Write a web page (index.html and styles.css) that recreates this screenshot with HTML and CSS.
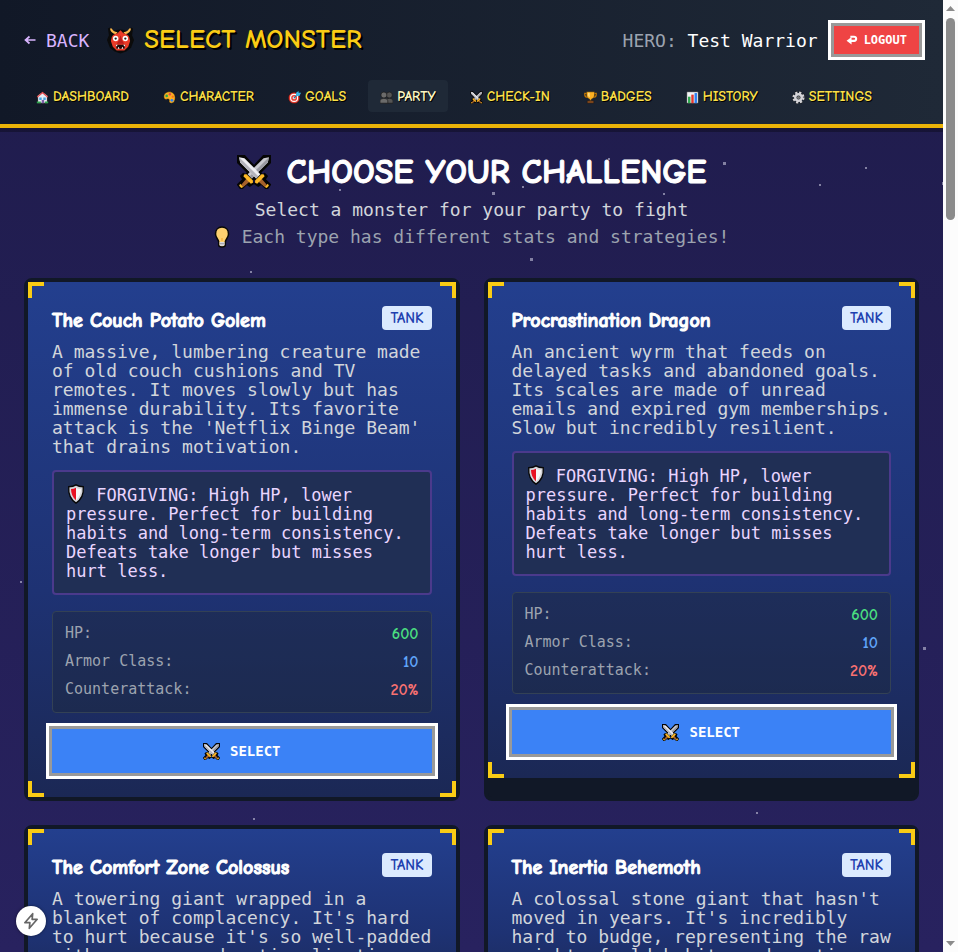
FILE: index.html
```
<!DOCTYPE html>
<html lang="en">
<head>
<meta charset="utf-8">
<meta name="viewport" content="width=device-width, initial-scale=1">
<title>Select Monster</title>
<link rel="stylesheet" href="styles.css">
</head>
<body>
<svg class="sprite" aria-hidden="true">
  <symbol id="swords" viewBox="0 0 32 32">
    <path d="M1 1h6l12 13 5 5 2-1 2 2-2 3 5 5-3 4-5-5-3 2-3-2 1-3L1 7zM31 1h-6L13 14l-5 5-2-1-2 2 2 3-5 5 3 4 5-5 3 2 3-2-1-3L31 7z" fill="#050505" stroke="#050505" stroke-width="2"/>
    <path d="M30 2l-5 1L10 18l4 4L29 7z" fill="#c9c9cf"/><path d="M30 2L12 20l2 2L29 7z" fill="#9a9aa2"/>
    <path d="M9 22l-5 6 2 2 6-5z" fill="#a5612b"/><path d="M3 27l3 3-2 1-2-2z" fill="#fdb827"/>
    <path d="M7 18l2 0 6 6 0 2-2 1-7-7z" fill="#fdb827"/>
    <path d="M2 2l5 1 15 15-4 4L3 7z" fill="#eeeef2"/><path d="M2 2l18 18-2 2L3 7z" fill="#b4b4bc"/>
    <path d="M23 22l5 6-2 2-6-5z" fill="#a5612b"/><path d="M29 27l-3 3 2 1 2-2z" fill="#fdb827"/>
    <path d="M25 18l-2 0-6 6 0 2 2 1 7-7z" fill="#fdb827"/>
  </symbol>
  <symbol id="house" viewBox="0 0 16 16">
    <path d="M2 15V7l-1-1 7-5 7 5-1 1v8z" fill="#e9eef5" stroke="#111" stroke-width="1"/>
    <path d="M1 7l7-6 7 6-1 1-6-5-6 5z" fill="#e5484d"/><path d="M4 8h3v3H4zM9 8h3v3H9z" fill="#4aa3df"/>
    <path d="M7 11h3v4H7z" fill="#7b5ea7"/><path d="M1 13h5v2H1zM11 13h4v2h-4z" fill="#2fa84f"/>
  </symbol>
  <symbol id="palette" viewBox="0 0 16 16">
    <path d="M8 1C3 1 1 4 1 7c0 3 2 4 4 3 2-.6 3 .4 2.600 2-.5 2 .8 3 2.900 3C14 15 15 11 15 8c0-4-3-7-7-7z" fill="#fdb022" stroke="#111" stroke-width=".6"/>
    <circle cx="4.500" cy="6" r="1.600" fill="#2ea84a"/><circle cx="8.500" cy="4" r="1.500" fill="#e5484d"/><circle cx="12" cy="7" r="1.400" fill="#f97316"/><circle cx="11" cy="11.500" r="1.700" fill="#2d7ff0"/>
  </symbol>
  <symbol id="target" viewBox="0 0 16 16">
    <circle cx="7.500" cy="8.500" r="7" fill="#e5392f" stroke="#111" stroke-width=".6"/><circle cx="7.500" cy="8.500" r="5" fill="#fff"/><circle cx="7.500" cy="8.500" r="3.600" fill="#e5392f"/><circle cx="7.500" cy="8.500" r="1.800" fill="#fff"/>
    <path d="M7 9l5-5" stroke="#2a6f97" stroke-width="1.500"/><path d="M10 5V2l3-2v2h3l-2 4h-4z" fill="#35b6e6"/>
  </symbol>
  <symbol id="people" viewBox="0 0 16 16">
    <g fill="#555" stroke="#151515" stroke-width=".8"><circle cx="11.500" cy="5" r="3.700"/><path d="M7 15v-3q0-3 4.500-3t4.500 3v3z"/><circle cx="4.800" cy="5" r="3.700" fill="#6b6b6b"/><path d="M0 15v-3q0-3 4.800-3t4.800 3v3z" fill="#6b6b6b"/></g>
  </symbol>
  <symbol id="trophy" viewBox="0 0 16 16">
    <path d="M4 3H1v2q0 3 4 3M12 3h3v2q0 3-4 3" fill="none" stroke="#c77800" stroke-width="1.500"/>
    <path d="M3 1h10v4q0 4-4 5v2H7v-2Q3 9 3 5z" fill="#fdb022" stroke="#111" stroke-width=".5"/><path d="M5 2h2v6Q5 7 5 5z" fill="#ffe08a"/>
    <path d="M4 12h8v3H4z" fill="#8a4b1c" stroke="#111" stroke-width=".5"/>
  </symbol>
  <symbol id="chart" viewBox="0 0 16 16">
    <path d="M1 1h14v14H1z" fill="#f3f4f6" stroke="#111" stroke-width=".5"/><path d="M2.500 7h3v8h-3z" fill="#2fa84f"/><path d="M6.500 4.500h3V15h-3z" fill="#e5392f"/><path d="M10.500 2.500h3V15h-3z" fill="#2d7ff0"/>
  </symbol>
  <symbol id="gear" viewBox="0 0 16 16">
    <circle cx="8" cy="8" r="6" fill="none" stroke="#111" stroke-width="4" stroke-dasharray="3 1.700"/>
    <circle cx="8" cy="8" r="6" fill="none" stroke="#d4d4d8" stroke-width="3" stroke-dasharray="2.700 2.010"/>
    <circle cx="8" cy="8" r="4" fill="none" stroke="#d4d4d8" stroke-width="3"/><circle cx="8" cy="8" r="2" fill="#777"/>
  </symbol>
  <symbol id="bulb" viewBox="0 0 16 22">
    <path d="M8 1C4 1 1.500 4 1.500 8c0 4 3 5 3.200 8v3q0 2 3.300 2t3.300-2v-3c.2-3 3.200-4 3.200-8 0-4-2.500-7-6.500-7z" fill="#fdd06f" stroke="#080808" stroke-width="1.500"/>
    <path d="M8 15v-3" fill="none" stroke="#f5a524"/><path d="M5.500 16h5v3q0 1-2.500 1t-2.500-1z" fill="#d6d6dc"/><path d="M5.500 17.700h5" stroke="#8b8b95" stroke-width=".8"/>
  </symbol>
  <symbol id="shield" viewBox="0 0 18 22">
    <path d="M9 1Q12 3 17 3q1 12-8 18Q0 15 1 3q5 0 8-2z" fill="#d5d5da" stroke="#080808" stroke-width="1.500"/>
    <path d="M9 4Q6.500 5.500 3.500 5.500 3.500 13 9 18z" fill="#e81123"/><path d="M9 4q2.500 1.500 5.500 1.500Q14.500 13 9 18z" fill="#f7f7f7"/>
  </symbol>
  <symbol id="oni" viewBox="0 0 28 28">
    <path d="M3 1l3 4q8-4 16 0l3-4 2 1-1 7 2 5-3 8-5 4-6 2-6-2-5-4-3-8 2-5-1-7z" fill="#0b0b0b"/>
    <path d="M3 2q1 5 6 6l2-2Q6 5 5 2zM25 2q-1 5-6 6l-2-2q5-1 6-4z" fill="#fdb84b"/>
    <path d="M14 4l3 3q5 1 6 4l1 4-2 6-4 4h-8l-4-4-2-6 1-4q1-3 6-4z" fill="#ea3b28"/>
    <path d="M14 9l2 6 2 3h-8l2-3z" fill="#b91c1c"/>
    <circle cx="9" cy="12.500" r="2.800" fill="#fff"/><circle cx="19" cy="12.500" r="2.800" fill="#fff"/><circle cx="9" cy="12.500" r="1.200" fill="#222"/><circle cx="19" cy="12.500" r="1.200" fill="#222"/>
    <path d="M9 19h10l-1 4h-8z" fill="#200808"/><path d="M9 19l1 2 1-2zM17 19l1 2 1-2zM11 23l1-2 1 2zM15 23l1-2 1 2z" fill="#fff"/>
  </symbol>
  <symbol id="return" viewBox="0 0 14 12">
    <path d="M5 2h4.500a2.300 2.300 0 010 5H4" fill="none" stroke="currentColor" stroke-width="2.500"/><path d="M6.500 2.500L.5 7l6 4.500z" fill="currentColor"/>
  </symbol>
  <symbol id="arrow-left" viewBox="0 0 12 12">
    <path d="M11.500 6H2M5.500 2.500L1.500 6l4 3.500" fill="none" stroke="currentColor" stroke-width="1.700"/>
  </symbol>
</svg>

<div class="shell">
  <div class="page">
    <header class="topbar">
      <div class="topbar-row">
        <div class="brand">
          <a class="back" href="#"><svg><use href="#arrow-left"/></svg>BACK</a>
          <h1><svg><use href="#oni"/></svg>SELECT MONSTER</h1>
        </div>
        <div class="hero">
          <span><span class="hero-label">HERO:</span> Test Warrior</span>
          <button class="pixel-button logout" type="button"><svg><use href="#return"/></svg>LOGOUT</button>
        </div>
      </div>
      <nav>
        <a href="#"><svg><use href="#house"/></svg>DASHBOARD</a>
        <a href="#"><svg><use href="#palette"/></svg>CHARACTER</a>
        <a href="#"><svg><use href="#target"/></svg>GOALS</a>
        <a class="active" href="#"><svg><use href="#people"/></svg>PARTY</a>
        <a href="#"><svg><use href="#swords"/></svg>CHECK-IN</a>
        <a href="#"><svg><use href="#trophy"/></svg>BADGES</a>
        <a href="#"><svg><use href="#chart"/></svg>HISTORY</a>
        <a href="#"><svg><use href="#gear"/></svg>SETTINGS</a>
      </nav>
    </header>

    <main>
      <svg class="stars" aria-hidden="true">
        <g fill="#b9b7d0" fill-opacity=".65">
          <rect x="339" y="61" width="2" height="2"/><rect x="492" y="64" width="3" height="3"/><rect x="522" y="58" width="2" height="2"/>
          <rect x="608" y="30" width="2" height="2"/><rect x="663" y="65" width="2" height="2"/><rect x="723" y="34" width="3" height="3"/>
          <rect x="530" y="130" width="3" height="3"/><rect x="250" y="143" width="2" height="2"/><rect x="865" y="39" width="2" height="2"/>
          <rect x="819" y="56" width="2" height="2"/><rect x="942" y="54" width="3" height="3"/><rect x="20" y="453" width="2" height="2"/>
          <rect x="923" y="519" width="3" height="3"/><rect x="756" y="684" width="2" height="2"/><rect x="253" y="690" width="2" height="2"/>
        </g>
      </svg>
      <section class="intro">
        <h2><svg><use href="#swords"/></svg>CHOOSE YOUR CHALLENGE</h2>
        <p>Select a monster for your party to fight</p>
        <p class="hint"><svg><use href="#bulb"/></svg>Each type has different stats and strategies!</p>
      </section>

      <section class="monsters">
        <article class="card"><div class="card-body">
          <i class="corner tl"></i><i class="corner tr"></i><i class="corner bl"></i><i class="corner br"></i>
          <div class="card-head"><h3>The Couch Potato Golem</h3><span class="badge">TANK</span></div>
          <p class="desc">A massive, lumbering creature made of old couch cushions and TV remotes. It moves slowly but has immense durability. Its favorite attack is the 'Netflix Binge Beam' that drains motivation.</p>
          <p class="trait"><svg><use href="#shield"/></svg> FORGIVING: High HP, lower pressure. Perfect for building habits and long-term consistency. Defeats take longer but misses hurt less.</p>
          <dl class="stats"><div><dt>HP:</dt><dd class="hp">600</dd></div><div><dt>Armor Class:</dt><dd class="ac">10</dd></div><div><dt>Counterattack:</dt><dd class="counter">20%</dd></div></dl>
          <button class="pixel-button select" type="button"><svg><use href="#swords"/></svg>SELECT</button>
        </div></article>

        <article class="card"><div class="card-body">
          <i class="corner tl"></i><i class="corner tr"></i><i class="corner bl"></i><i class="corner br"></i>
          <div class="card-head"><h3>Procrastination Dragon</h3><span class="badge">TANK</span></div>
          <p class="desc">An ancient wyrm that feeds on delayed tasks and abandoned goals. Its scales are made of unread emails and expired gym memberships. Slow but incredibly resilient.</p>
          <p class="trait"><svg><use href="#shield"/></svg> FORGIVING: High HP, lower pressure. Perfect for building habits and long-term consistency. Defeats take longer but misses hurt less.</p>
          <dl class="stats"><div><dt>HP:</dt><dd class="hp">600</dd></div><div><dt>Armor Class:</dt><dd class="ac">10</dd></div><div><dt>Counterattack:</dt><dd class="counter">20%</dd></div></dl>
          <button class="pixel-button select" type="button"><svg><use href="#swords"/></svg>SELECT</button>
        </div></article>

        <article class="card"><div class="card-body">
          <i class="corner tl"></i><i class="corner tr"></i>
          <div class="card-head"><h3>The Comfort Zone Colossus</h3><span class="badge">TANK</span></div>
          <p class="desc">A towering giant wrapped in a blanket of complacency. It's hard to hurt because it's so well-padded with excuses and rationalizations.</p>
        </div></article>

        <article class="card"><div class="card-body">
          <i class="corner tl"></i><i class="corner tr"></i>
          <div class="card-head"><h3>The Inertia Behemoth</h3><span class="badge">TANK</span></div>
          <p class="desc">A colossal stone giant that hasn't moved in years. It's incredibly hard to budge, representing the raw weight of old habits and routines.</p>
        </div></article>
      </section>
    </main>
  </div>

  <div class="scrollbar" aria-hidden="true">
    <svg viewBox="0 0 9 5"><path d="M4.500 0L9 5H0z"/></svg>
    <div class="track"><div class="thumb"></div></div>
    <svg viewBox="0 0 9 5"><path d="M4.500 5L9 0H0z"/></svg>
  </div>
</div>

<button class="dev-badge" type="button" aria-label="Developer tools">
  <svg viewBox="0 0 16 16"><path d="M9.500 1.500L2.500 9.500h4.500L6.500 14.500l7-8H9z" fill="none" stroke="#666" stroke-width="1.500" stroke-linejoin="round"/></svg>
</button>
</body>
</html>
```
FILE: styles.css
```
:root {
  --mono: Consolas, "DejaVu Sans Mono", "Liberation Mono", monospace;
  --comic: "Comic Sans MS", "Comic Neue", "Open Sans", sans-serif;
}

* { box-sizing: border-box; }

body {
  margin: 0;
  background: #1e1b4b;
  color: #fff;
  font: 18px/19px var(--mono);
}

h1, h2, h3, p, dl, dd { margin: 0; }
a { color: inherit; text-decoration: none; }
button { font: inherit; color: inherit; cursor: pointer; }
.sprite { position: absolute; width: 0; height: 0; }

.shell { display: flex; height: 100vh; }
.page {
  flex: 1;
  min-width: 0;
  overflow: auto;
  scrollbar-width: none;
  background: linear-gradient(#1f1c4c, #28225f);
}

/* Header */
.topbar {
  position: relative;
  z-index: 1;
  padding: 20px 24px 12px;
  border-bottom: 4px solid #eab308;
  background: linear-gradient(to right, #111827, #1f2937);
  box-shadow: 0 4px 0 rgba(0, 0, 0, .3);
}
.topbar-row, .brand, .hero, .back, h1, nav, nav a { display: flex; align-items: center; }
.topbar-row { justify-content: space-between; height: 40px; margin-bottom: 20px; }
.brand { gap: 18px; }
.back { gap: 10px; color: #d8b4fe; }
.back svg { width: 12px; height: 12px; }
h1 {
  gap: 10px;
  font: 700 27px/32px var(--comic);
  color: #facc15;
  text-shadow: 2px 2px 0 #000;
}
h1 svg { width: 27px; height: 28px; }
.hero { gap: 16px; }
.hero-label { color: #9ca3af; }

.pixel-button {
  display: flex;
  align-items: center;
  justify-content: center;
  border: 0;
  font-weight: 700;
  box-shadow: 0 0 0 3px #999, 0 0 0 6px #fff;
}
.logout {
  gap: 6px;
  height: 28px;
  padding: 0 12px;
  background: #ef4444;
  font-size: 12px;
}
.logout svg { width: 12px; height: 10px; }

nav { gap: 10px; }
nav a {
  gap: 4px;
  height: 32px;
  padding: 2px 12px 0;
  border-radius: 4px;
  font: 700 14px/16px var(--comic);
  color: #fde047;
  text-shadow: 1px 1px 0 #000;
}
nav svg { width: 13px; height: 13px; }
nav .active { background: #1f2937; color: #fef9c3; }

/* Intro */
main { position: relative; padding: 24px 24px 48px; }
.stars {
  position: absolute;
  inset: 0;
  width: 100%;
  height: 100%;
  pointer-events: none;
}
.intro { margin-bottom: 28px; text-align: center; color: #d1d5db; }
h2 {
  display: flex;
  align-items: center;
  justify-content: center;
  gap: 16px;
  margin-bottom: 4px;
  font: 700 34px/40px var(--comic);
  color: #fff;
}
h2, h3 { -webkit-text-stroke: 1px currentColor; }
h2 svg { width: 34px; height: 34px; }
.intro p { line-height: 27px; }
.intro .hint {
  display: flex;
  align-items: center;
  justify-content: center;
  gap: 12px;
  color: #9ca3af;
}
.hint svg { width: 16px; height: 22px; }

/* Monster cards */
.monsters { display: grid; grid-template-columns: 1fr 1fr; gap: 24px; }
.card {
  position: relative;
  min-width: 0;
  border: 4px solid #111827;
  border-radius: 8px;
  background: #111827;
}
.card-body {
  position: relative;
  padding: 24px;
  background: linear-gradient(#233f8e, #1e3273 60%, #1b2855);
}
.corner { position: absolute; width: 16px; height: 16px; border: 0 solid #facc15; }
.tl { top: 0; left: 0; border-width: 4px 0 0 4px; }
.tr { top: 0; right: 0; border-width: 4px 4px 0 0; }
.bl { bottom: 0; left: 0; border-width: 0 0 4px 4px; }
.br { bottom: 0; right: 0; border-width: 0 4px 4px 0; }

.card-head {
  display: flex;
  align-items: flex-start;
  justify-content: space-between;
  margin-bottom: 6px;
}
h3 { font: 700 20px/30px var(--comic); }
.badge {
  padding: 0 8px;
  border-radius: 4px;
  background: #dbeafe;
  color: #1e40af;
  font: 700 15px/24px var(--comic);
}
.desc { margin-bottom: 14px; color: #d1d5db; }
.trait {
  margin-bottom: 16px;
  padding: 12px;
  border: 2px solid #4b3a8c;
  border-radius: 4px;
  background: #202f55;
  color: #e9d5ff;
  font-size: 17px;
}
.trait svg { width: 20px; height: 20px; vertical-align: -3px; }
.stats {
  display: grid;
  gap: 8px;
  margin-bottom: 16px;
  padding: 12px;
  border: 1px solid #334155;
  border-radius: 4px;
  background: rgba(31, 41, 55, .4);
}
.stats div { display: flex; justify-content: space-between; line-height: 20px; }
dt { color: #9ca3af; font-size: 15px; line-height: 18px; }
dd { font: 700 16px/20px var(--comic); }
.hp { color: #4ade80; }
.ac { color: #60a5fa; }
.counter { color: #f87171; }
.select {
  gap: 10px;
  width: 100%;
  height: 44px;
  background: #3b82f6;
  font-size: 14px;
}
.select svg { width: 17px; height: 17px; }

/* Scrollbar */
.scrollbar {
  display: flex;
  flex-direction: column;
  align-items: center;
  gap: 7px;
  width: 15px;
  padding: 6px 0;
  background: #fcfcfc;
  fill: #8b8b8b;
}
.scrollbar svg { width: 9px; height: 5px; }
.track { flex: 1; width: 9px; }
.thumb { height: 22%; border-radius: 5px; background: #8b8b8b; }

.dev-badge {
  position: fixed;
  left: 16px;
  bottom: 16px;
  display: grid;
  place-items: center;
  width: 30px;
  height: 30px;
  padding: 0;
  border: 0;
  border-radius: 50%;
  background: #fff;
  box-shadow: 0 0 3px rgba(0, 0, 0, .5);
}
.dev-badge svg { width: 18px; height: 18px; }
```
